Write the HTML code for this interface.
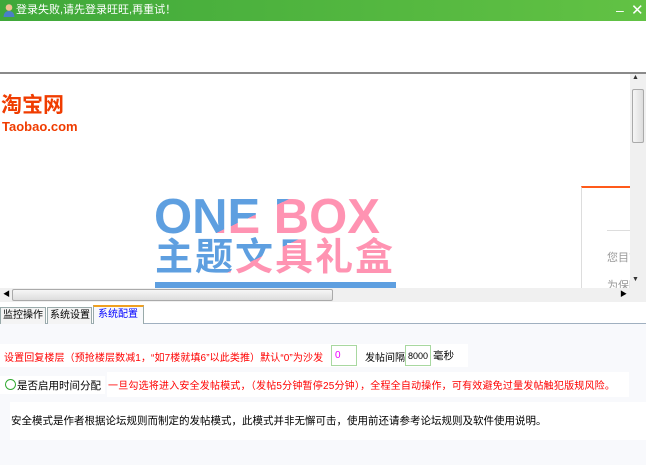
<!DOCTYPE html>
<html><head><meta charset="utf-8"><style>
*{margin:0;padding:0;box-sizing:border-box}
body{width:646px;height:465px;overflow:hidden;background:#fff;font-family:"Liberation Sans","Noto Sans CJK SC",sans-serif;font-size:12px;position:relative}
.a{position:absolute;white-space:nowrap}
.title{left:0;top:0;width:646px;height:21px;background:linear-gradient(90deg,#3fa83a,#62c244);color:#fff;font-size:11px;line-height:20px;padding-left:16px}
.grad{background:linear-gradient(155deg,#5e9fe0 0%,#5e9fe0 45%,#ff93b2 45%,#ff93b2 100%);-webkit-background-clip:text;background-clip:text;color:transparent}
.tab{top:307px;height:17px;border:1px solid #9aa;border-bottom:none;background:#f4f4f4;font-size:10px;line-height:15px;padding-left:2px;color:#000;overflow:hidden}
</style></head><body>
<div class="a title">登录失败,请先登录旺旺,再重试！</div>
<svg class="a" style="left:3px;top:3px" width="12" height="14"><circle cx="6" cy="4.5" r="3.3" fill="#f0c090"/><path d="M0.5 14 Q1 8 6 8 Q11 8 11.5 14Z" fill="#4a7fc8"/></svg>
<div class="a" style="left:616px;top:2px;color:#fff;font-size:14px">–</div>
<div class="a" style="left:631px;top:1px;color:#fff;font-size:15px">✕</div>
<div class="a" style="left:0;top:72px;width:646px;height:2px;background:#8a8a8a"></div>
<div class="a" style="left:1px;top:94px;color:#f03c00;font-size:21px;line-height:24px;font-weight:bold">淘宝网</div>
<div class="a" style="left:2px;top:119px;color:#f03c00;font-size:13px;line-height:15px;font-weight:bold">Taobao.com</div>
<div class="a grad" style="left:154px;top:193px;font-size:49px;font-weight:bold;line-height:48px;letter-spacing:0px">ONE BOX</div>
<div class="a grad" style="left:155px;top:237px;font-size:38px;line-height:42px;letter-spacing:2px;font-weight:bold">主题文具礼盒</div>
<div class="a" style="left:155px;top:282px;width:241px;height:8px;background:#5e9fe0"></div>
<div class="a" style="left:581px;top:186px;width:49px;height:102px;border-left:1px solid #ddd;border-top:2px solid #ff5a1a"></div>
<div class="a" style="left:607px;top:230px;width:23px;height:1px;background:#ddd"></div>
<div class="a" style="left:607px;top:249px;color:#999;font-size:11px;width:23px;overflow:hidden">您目前</div>
<div class="a" style="left:607px;top:277px;color:#999;font-size:11px;width:23px;overflow:hidden">为保障</div>
<div class="a" style="left:630px;top:74px;width:16px;height:214px;background:#f0f0f0"></div>
<div class="a" style="left:632px;top:89px;width:12px;height:54px;background:linear-gradient(90deg,#f6f6f6,#ddd);border:1px solid #aaa;border-radius:2px"></div>
<div class="a" style="left:632px;top:74px;font-size:7px;color:#333">▲</div>
<div class="a" style="left:632px;top:276px;font-size:7px;color:#333">▼</div>
<div class="a" style="left:0;top:288px;width:646px;height:14px;background:#f0f0f0"></div>
<div class="a" style="left:12px;top:289px;width:321px;height:12px;background:linear-gradient(#f6f6f6,#ddd);border:1px solid #aaa;border-radius:2px"></div>
<div class="a" style="left:3px;top:289px;font-size:7px">◀</div>
<div class="a" style="left:620px;top:289px;font-size:7px">▶</div>
<div class="a" style="left:0;top:302px;width:646px;height:163px;background:#fff"></div>
<div class="a" style="left:0;top:323px;width:646px;height:142px;background:#f8f9fc;border-top:1px solid #a0b0c0"></div>
<div class="a tab" style="left:0;width:46px">监控操作</div>
<div class="a tab" style="left:47px;width:45px">系统设置</div>
<div class="a tab" style="left:93px;top:305px;height:19px;width:51px;background:#f8f9fc;border-top:2px solid #f0a020;color:#00f;padding-left:4px">系统配置</div>
<div class="a" style="left:0;top:344px;width:468px;height:23px;background:#fff"></div>
<div class="a" style="left:4px;top:349px;color:#f00;font-size:10px;letter-spacing:0.1px">设置回复楼层（预抢楼层数减1，“如7楼就填6”以此类推）默认“0”为沙发</div>
<div class="a" style="left:331px;top:345px;width:26px;height:21px;border:1px solid #a8d8a0;background:#fff;color:#e0f;font-size:10px;padding:4px 0 0 3px">0</div>
<div class="a" style="left:365px;top:349px;font-size:10px">发帖间隔</div>
<div class="a" style="left:405px;top:345px;width:26px;height:21px;border:1px solid #a8d8a0;background:#fff;font-size:9px;padding:5px 0 0 2px">8000</div>
<div class="a" style="left:433px;top:348px;font-size:10.5px">毫秒</div>
<div class="a" style="left:0;top:376px;width:105px;height:18px;background:#fff"></div>
<div class="a" style="left:5px;top:379px;width:11px;height:11px;border:1px solid #3a3;border-radius:50%"></div>
<div class="a" style="left:17px;top:378px;font-size:10.5px">是否启用时间分配</div>
<div class="a" style="left:107px;top:372px;width:522px;height:25px;background:#fff;color:#f00;font-size:10px;padding:5px 0 0 1px;letter-spacing:0.2px">一旦勾选将进入安全发帖模式，（发帖5分钟暂停25分钟），全程全自动操作，可有效避免过量发帖触犯版规风险。</div>
<div class="a" style="left:10px;top:402px;width:636px;height:38px;background:#fff;font-size:10.5px;padding:11px 0 0 1px">安全模式是作者根据论坛规则而制定的发帖模式，此模式并非无懈可击，使用前还请参考论坛规则及软件使用说明。</div>
</body></html>
